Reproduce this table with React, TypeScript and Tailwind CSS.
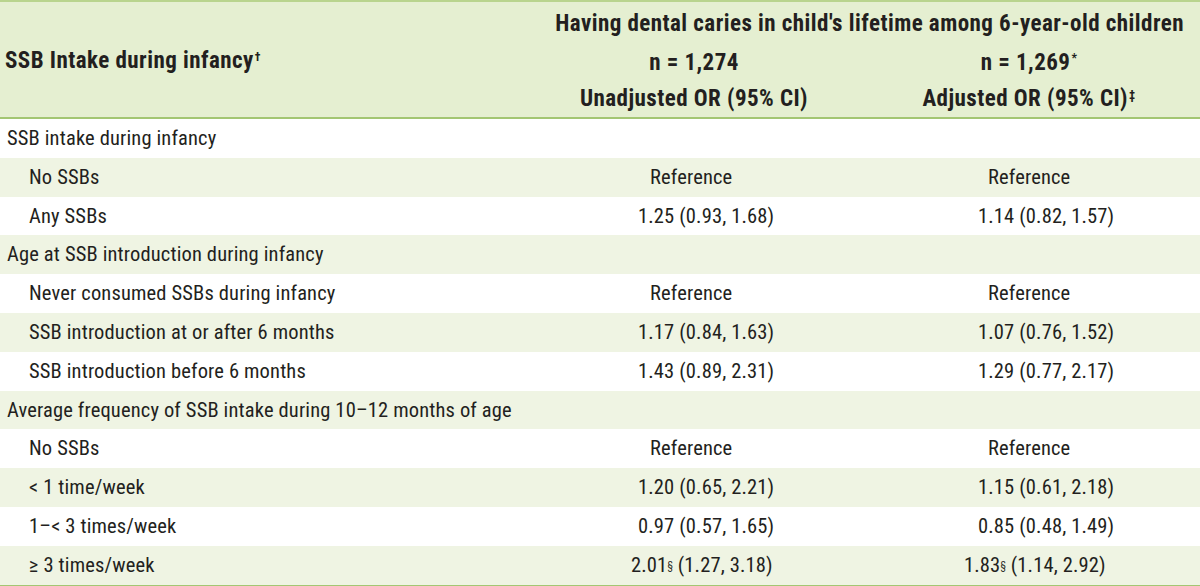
import React from "react";

type Row = {
  label: string;
  indent?: boolean;
  a?: React.ReactNode;
  b?: React.ReactNode;
  wide?: boolean;
};

const Sup = ({ children }: { children: React.ReactNode }) => (
  <sup className="text-[12px] relative -top-[5px] ml-[1px]">{children}</sup>
);

const Sec = () => <sup className="text-[10px] relative -top-[3px]">§</sup>;

const rows: Row[] = [
  { label: "SSB intake during infancy" },
  { label: "No SSBs", indent: true, a: "Reference", b: "Reference" },
  { label: "Any SSBs", indent: true, a: "1.25 (0.93, 1.68)", b: "1.14 (0.82, 1.57)" },
  { label: "Age at SSB introduction during infancy" },
  { label: "Never consumed SSBs during infancy", indent: true, a: "Reference", b: "Reference" },
  { label: "SSB introduction at or after 6 months", indent: true, a: "1.17 (0.84, 1.63)", b: "1.07 (0.76, 1.52)" },
  { label: "SSB introduction before 6 months", indent: true, a: "1.43 (0.89, 2.31)", b: "1.29 (0.77, 2.17)" },
  { label: "Average frequency of SSB intake during 10–12 months of age" },
  { label: "No SSBs", indent: true, a: "Reference", b: "Reference" },
  { label: "< 1 time/week", indent: true, a: "1.20 (0.65, 2.21)", b: "1.15 (0.61, 2.18)" },
  { label: "1–< 3 times/week", indent: true, a: "0.97 (0.57, 1.65)", b: "0.85 (0.48, 1.49)" },
  {
    label: "≥ 3 times/week",
    indent: true,
    wide: true,
    a: (
      <>
        2.01<Sec /> (1.27, 3.18)
      </>
    ),
    b: (
      <>
        1.83<Sec /> (1.14, 2.92)
      </>
    ),
  },
];

export default function App() {
  return (
    <div
      className="w-[1200px] h-[586px] bg-white text-[#231f20] overflow-hidden"
      style={{ fontFamily: "'Roboto Condensed', 'Liberation Sans', sans-serif" }}
    >
      {/* header */}
      <div className="border-t-2 border-b-2 border-t-[#b9d48e] border-b-[#a3c673] bg-[#e5efd1] h-[119px] grid grid-cols-[560px_268px_1fr] grid-rows-[42px_38px_35px] font-bold text-[23px] tracking-[0.45px]">
        <div className="row-span-3 flex items-center pl-[5px] pt-[4px]">
          SSB Intake during infancy<Sup>†</Sup>
        </div>
        <div className="col-span-2 flex items-center justify-end pr-[16px] pt-[2px] whitespace-nowrap">
          Having dental caries in child's lifetime among 6-year-old children
        </div>
        <div className="flex items-center justify-center">n = 1,274</div>
        <div className="flex items-center justify-center pl-[30px]">
          n = 1,269<Sup>*</Sup>
        </div>
        <div className="flex items-center justify-center">Unadjusted OR (95% CI)</div>
        <div className="flex items-center justify-center pl-[30px]">
          Adjusted OR (95% CI)<Sup>‡</Sup>
        </div>
      </div>

      {/* body */}
      <div className="flex flex-col text-[20.5px] tracking-[0.15px]">
        {rows.map((r, i) => (
          <div
            key={i}
            className={`flex h-[38.8px] items-center ${i % 2 === 1 ? "bg-[#eff4e3]" : "bg-white"}`}
          >
            <div className={`w-[638px] shrink-0 ${r.indent ? "pl-[29px]" : "pl-[7px]"}`}>{r.label}</div>
            <div
              className={`w-[340px] shrink-0 ${r.a === "Reference" ? "pl-[12px]" : r.wide ? "-ml-[7px]" : ""}`}
            >
              {r.a}
            </div>
            <div className={`flex-1 ${r.b === "Reference" ? "pl-[10px]" : r.wide ? "-ml-[7px]" : ""}`}>
              {r.b}
            </div>
          </div>
        ))}
      </div>
      <div className="h-[2px] bg-[#a3c673]" />
    </div>
  );
}
